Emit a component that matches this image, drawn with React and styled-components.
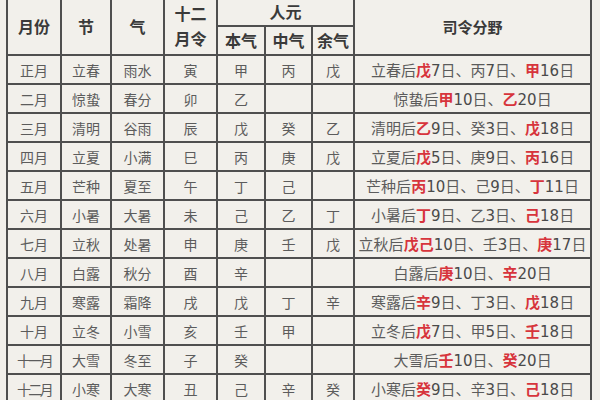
import React from "react";
import styled, { createGlobalStyle } from "styled-components";

const Global = createGlobalStyle`
  html, body { margin: 0; padding: 0; background: #f2f0eb; }
  body { width: 600px; height: 400px; overflow: hidden; }
`;

const Page = styled.div`
  width: 600px;
  height: 400px;
  overflow: hidden;
  background: #f2f0eb;
  padding: 0 0 0 6px;
  box-sizing: border-box;
`;

const Table = styled.table`
  margin-top: -4px;
  border-collapse: collapse;
  table-layout: fixed;
  width: 586px;
  font-family: "DejaVu Sans", "Noto Sans CJK SC", sans-serif;
  color: #606060;
`;

const HeadCell = styled.th`
  border: 2px solid #4f4f4f;
  font-family: "Noto Sans CJK SC", sans-serif;
  font-weight: 700;
  font-size: ${(p) => p.$size || 16}px;
  line-height: 25px;
  color: #3a3a3a;
  text-align: center;
  padding: 0;
`;

const HeadRow = styled.tr`
  height: 29px;
`;

const Row = styled.tr`
  height: 29px;
`;

const Cell = styled.td`
  border: 2px solid #4f4f4f;
  font-family: "Noto Sans CJK SC", sans-serif;
  font-size: 14px;
  letter-spacing: ${(p) => (p.$tight ? "-2.6px" : "0")};
  text-align: center;
  padding: 0;
  white-space: nowrap;
  color: #5c5c5c;
`;

const DutyCell = styled.td`
  border: 2px solid #4f4f4f;
  font-size: 15px;
  text-align: center;
  padding: 0;
  white-space: nowrap;
  color: #5c5c5c;
`;

const Digits = styled.span`
  color: #4a4a4a;
`;

const Red = styled.span`
  font-family: "Noto Sans CJK SC", sans-serif;
  font-weight: 700;
  color: #d7343c;
`;

const rows = [
  ["正月", "立春", "雨水", "寅", "甲", "丙", "戊", "立春后*戊*7日、丙7日、*甲*16日"],
  ["二月", "惊蛰", "春分", "卯", "乙", "", "", "惊蛰后*甲*10日、*乙*20日"],
  ["三月", "清明", "谷雨", "辰", "戊", "癸", "乙", "清明后*乙*9日、癸3日、*戊*18日"],
  ["四月", "立夏", "小满", "巳", "丙", "庚", "戊", "立夏后*戊*5日、庚9日、*丙*16日"],
  ["五月", "芒种", "夏至", "午", "丁", "己", "", "芒种后*丙*10日、己9日、*丁*11日"],
  ["六月", "小暑", "大暑", "未", "己", "乙", "丁", "小暑后*丁*9日、乙3日、*己*18日"],
  ["七月", "立秋", "处暑", "申", "庚", "壬", "戊", "立秋后*戊己*10日、壬3日、*庚*17日"],
  ["八月", "白露", "秋分", "酉", "辛", "", "", "白露后*庚*10日、*辛*20日"],
  ["九月", "寒露", "霜降", "戌", "戊", "丁", "辛", "寒露后*辛*9日、丁3日、*戊*18日"],
  ["十月", "立冬", "小雪", "亥", "壬", "甲", "", "立冬后*戊*7日、甲5日、*壬*18日"],
  ["十一月", "大雪", "冬至", "子", "癸", "", "", "大雪后*壬*10日、*癸*20日"],
  ["十二月", "小寒", "大寒", "丑", "己", "辛", "癸", "小寒后*癸*9日、辛3日、*己*18日"],
];

function renderDuty(text) {
  return text.split("*").map((part, i) => {
    if (i % 2 === 1) return <Red key={i}>{part}</Red>;
    return part.split(/(\d+)/).map((seg, j) =>
      /^\d+$/.test(seg) ? <Digits key={`${i}-${j}`}>{seg}</Digits> : <React.Fragment key={`${i}-${j}`}>{seg}</React.Fragment>
    );
  });
}

const widths = [54, 50, 53, 53, 48, 47, 42, 237];

export default function App() {
  return (
    <Page>
      <Global />
      <Table>
        <colgroup>
          {widths.map((w, i) => (
            <col key={i} style={{ width: w }} />
          ))}
        </colgroup>
        <thead>
          <HeadRow>
            <HeadCell rowSpan={2}>月份</HeadCell>
            <HeadCell rowSpan={2}>节</HeadCell>
            <HeadCell rowSpan={2}>气</HeadCell>
            <HeadCell rowSpan={2}>十二<br />月令</HeadCell>
            <HeadCell colSpan={3}>人元</HeadCell>
            <HeadCell rowSpan={2} $size={15}>司令分野</HeadCell>
          </HeadRow>
          <HeadRow>
            <HeadCell>本气</HeadCell>
            <HeadCell>中气</HeadCell>
            <HeadCell>余气</HeadCell>
          </HeadRow>
        </thead>
        <tbody>
          {rows.map((r) => (
            <Row key={r[0]}>
              <Cell $tight={r[0].length > 2}>{r[0]}</Cell>
              <Cell>{r[1]}</Cell>
              <Cell>{r[2]}</Cell>
              <Cell>{r[3]}</Cell>
              <Cell>{r[4]}</Cell>
              <Cell>{r[5]}</Cell>
              <Cell>{r[6]}</Cell>
              <DutyCell>{renderDuty(r[7])}</DutyCell>
            </Row>
          ))}
        </tbody>
      </Table>
    </Page>
  );
}
